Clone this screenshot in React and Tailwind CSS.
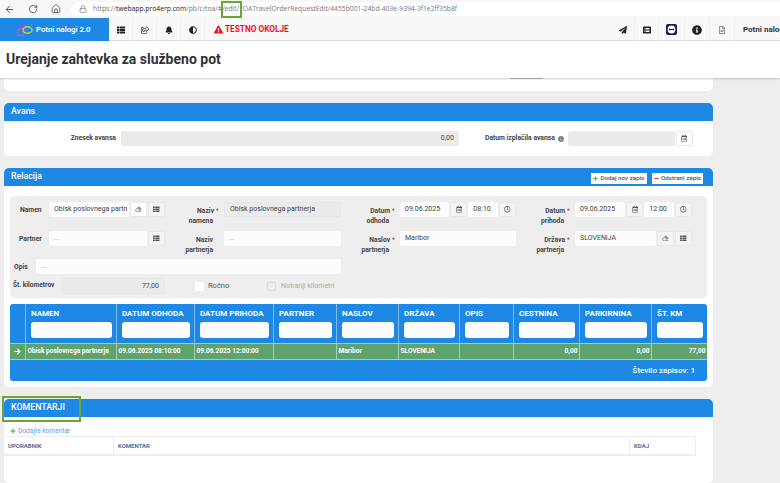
import React from 'react';
import { ArrowLeft, RotateCw, Home, Lock } from 'lucide-react';
import {
  FaThList, FaRegShareSquare, FaBell, FaAdjust, FaExclamationTriangle, FaPaperPlane, FaListAlt,
  FaInfoCircle, FaRegFileAlt, FaEraser, FaRegCalendarAlt, FaRegClock, FaPlus, FaMinus, FaArrowRight,
} from 'react-icons/fa';

const columns = [
  { key: 'namen', label: 'NAMEN', w: 'w-[91px]', value: 'Obisk poslovnega partnerja' },
  { key: 'odhod', label: 'DATUM ODHODA', w: 'w-[78px]', value: '09.06.2025 08:10:00' },
  { key: 'prihod', label: 'DATUM PRIHODA', w: 'w-[79px]', value: '09.06.2025 12:00:00' },
  { key: 'partner', label: 'PARTNER', w: 'w-[63px]', value: '' },
  { key: 'naslov', label: 'NASLOV', w: 'w-[62px]', value: 'Maribor' },
  { key: 'drzava', label: 'DRŽAVA', w: 'w-[61px]', value: 'SLOVENIJA' },
  { key: 'opis', label: 'OPIS', w: 'w-[54px]', value: '' },
  { key: 'cestnina', label: 'CESTNINA', w: 'w-[66px]', value: '0,00', right: true },
  { key: 'parkirnina', label: 'PARKIRNINA', w: 'w-[72px]', value: '0,00', right: true },
  { key: 'km', label: 'ŠT. KM', w: 'w-[55px]', value: '77,00', right: true },
];

function Logo() {
  return (
    <svg width="17" height="14" viewBox="0 0 17 14" fill="none" className="mr-[3px]">
      <ellipse cx="5" cy="9" rx="4" ry="3.4" stroke="#e8508f" strokeWidth="1.3" transform="rotate(-35 5 9)" />
      <ellipse cx="7" cy="4.5" rx="2.6" ry="3.4" stroke="#7b5cd6" strokeWidth="1.2" />
      <ellipse cx="11.5" cy="7" rx="4.6" ry="3.2" stroke="#c6d63a" strokeWidth="1.4" />
    </svg>
  );
}

function TeamIcon() {
  return (
    <svg width="11" height="11" viewBox="0 0 11 11">
      <rect width="11" height="11" rx="2" fill="#14146b" />
      <circle cx="5.5" cy="5.5" r="3.9" fill="#fff" />
      <path d="M2.4 5.5 4 4.3v.7h3v-.7l1.6 1.2L7 6.7V6H4v.7z" fill="#14146b" />
    </svg>
  );
}

function NavIcon({ children, className = '' }) {
  return (
    <div className={`flex h-full w-[24px] items-center justify-center border-r border-[#f0f0f0] text-[8px] text-[#222] ${className}`}>
      {children}
    </div>
  );
}

function Btn({ children, className = 'w-[17px]' }) {
  return (
    <div className={`flex h-[15px] shrink-0 items-center justify-center rounded-[2px] border border-[#e8e8e8] bg-[#f4f4f4] text-[6.5px] text-[#555] ${className}`}>
      {children}
    </div>
  );
}

function Input({ children, className = '', gray, right }) {
  return (
    <div className={`flex h-[15px] min-w-0 items-center overflow-hidden whitespace-nowrap rounded-[2px] px-[5px] text-[7px] text-[#444] ${gray ? 'bg-[#ebebeb]' : 'bg-[#fcfcfc]'} ${right ? 'justify-end' : ''} ${className}`}>
      {children}
    </div>
  );
}

function Label({ lines, star, w }) {
  return (
    <div className={`shrink-0 pr-[11px] pt-[4px] text-right text-[6.75px] font-bold leading-[10px] text-[#444] ${w}`}>
      {lines[0]}
      {star && <span className="ml-[2px] mr-[-6px] font-normal text-[#c0392b]">*</span>}
      {lines[1] && <div>{lines[1]}</div>}
    </div>
  );
}

function Card({ title, right, children, className = '' }) {
  return (
    <div className={`overflow-hidden rounded-[5px] bg-white ${className}`}>
      <div className="flex h-[18px] items-center justify-between bg-[#1e88e5] pl-[7px] pr-[10px] text-[8.8px] font-medium text-white">
        <span>{title}</span>
        {right}
      </div>
      {children}
    </div>
  );
}

function HeaderButton({ icon, label, w }) {
  return (
    <div className={`flex h-[11px] items-center justify-center gap-[2px] whitespace-nowrap bg-white text-[6.25px] text-[#555] ${w}`}>
      {icon}
      {label}
    </div>
  );
}

function RelacijaForm() {
  return (
    <div className="h-[102px] rounded-[5px] bg-[#eeeeee] pt-[6px]">
      <div className="flex h-[29px]">
        <div className="w-[39px] shrink-0 pl-[10px] pt-[3px] text-[6.75px] font-bold leading-[10px] text-[#444]">Namen</div>
        <div className="flex w-[116px] shrink-0 items-start gap-[1px]">
          <Input className="w-[80px]">Obisk poslovnega partn</Input>
          <Btn className="w-[17px] bg-white text-[#999]"><FaEraser /></Btn>
          <Btn><FaThList /></Btn>
        </div>
        <Label lines={['Naziv', 'namena']} star w="w-[59px]" />
        <Input gray className="w-[117px] border border-[#e6e6e6]">Obisk poslovnega partnerja</Input>
        <Label lines={['Datum', 'odhoda']} star w="w-[59px]" />
        <div className="flex w-[116px] shrink-0 items-start gap-[1px]">
          <Input className="w-[50px]">09.06.2025</Input>
          <Btn><FaRegCalendarAlt /></Btn>
          <Input className="w-[30px]">08:10</Input>
          <Btn><FaRegClock /></Btn>
        </div>
        <Label lines={['Datum', 'prihoda']} star w="w-[59px]" />
        <div className="flex w-[117px] shrink-0 items-start gap-[1px]">
          <Input className="w-[51px]">09.06.2025</Input>
          <Btn><FaRegCalendarAlt /></Btn>
          <Input className="w-[30px]">12:00</Input>
          <Btn><FaRegClock /></Btn>
        </div>
      </div>
      <div className="flex h-[28px]">
        <div className="w-[39px] shrink-0 pl-[9px] pt-[3px] text-[6.75px] font-bold leading-[10px] text-[#444]">Partner</div>
        <div className="flex w-[116px] shrink-0 items-start gap-[1px]">
          <Input className="w-[98px] text-[#aaa]">...</Input>
          <Btn><FaThList /></Btn>
        </div>
        <Label lines={['Naziv', 'partnerja']} w="w-[59px]" />
        <Input className="w-[117px] text-[#aaa]">...</Input>
        <Label lines={['Naslov', 'partnerja']} star w="w-[59px]" />
        <Input className="w-[116px]">Maribor</Input>
        <Label lines={['Država', 'partnerja']} star w="w-[59px]" />
        <div className="flex w-[117px] shrink-0 items-start gap-[1px]">
          <Input className="w-[81px]">SLOVENIJA</Input>
          <Btn className="w-[17px] text-[#999]"><FaEraser /></Btn>
          <Btn><FaThList /></Btn>
        </div>
      </div>
      <div className="flex h-[19px] items-start">
        <div className="w-[26px] shrink-0 pl-[4px] pt-[3px] text-[6.75px] font-bold leading-[10px] text-[#444]">Opis</div>
        <Input className="w-[305px] text-[#aaa]">...</Input>
      </div>
      <div className="flex h-[16px] items-center">
        <div className="w-[52px] shrink-0 whitespace-nowrap pl-[3px] text-[6.6px] font-bold text-[#444]">Št. kilometrov</div>
        <Input gray right className="h-[16px] w-[103px] border border-[#e6e6e6]">77,00</Input>
        <div className="ml-[30px] h-[9px] w-[9px] rounded-[1px] bg-white" />
        <span className="ml-[4px] w-[21px] text-[7.5px] text-[#555]">Ročno</span>
        <div className="ml-[38px] h-[9px] w-[9px] rounded-[1px] border border-[#dcdcdc]" />
        <span className="ml-[5px] whitespace-nowrap text-[7px] text-[#aaa]">Notranji kilometri</span>
      </div>
    </div>
  );
}

function TravelTable() {
  return (
    <div className="mt-[6px] h-[77px] overflow-hidden rounded-[3px] bg-[#1e88e5]">
      <div className="flex h-[39px]">
        <div className="w-[16px] border-r border-[#7fb8ec]" />
        {columns.map((c) => (
          <div key={c.key} className={`${c.w} border-r border-[#7fb8ec] pl-[5px] pr-[4px] pt-[5px] last:border-r-0`}>
            <div className="h-[13px] whitespace-nowrap text-[8px] font-bold leading-[10px] text-white">{c.label}</div>
            <div className="h-[16px] rounded-[3px] bg-[#fcfcfc]" />
          </div>
        ))}
      </div>
      <div className="flex h-[17px] border-y border-[#a9cdb0] bg-[#5fa36c] text-[6.6px] font-bold text-white">
        <div className="flex w-[16px] items-center justify-center border-r border-[#a9cdb0] text-[7px]"><FaArrowRight /></div>
        {columns.map((c) => (
          <div key={c.key} className={`${c.w} flex items-center overflow-hidden whitespace-nowrap border-r border-[#a9cdb0] px-[1.5px] last:border-r-0 ${c.right ? 'justify-end' : ''}`}>
            {c.value}
          </div>
        ))}
      </div>
      <div className="flex h-[21px] items-center justify-end pr-[12px] text-[8px] font-medium text-white">
        Število zapisov: 1
      </div>
    </div>
  );
}

export default function App() {
  return (
    <div className="relative h-[483px] w-[780px] overflow-hidden bg-[#eeeeee] font-['Roboto',sans-serif]">
      {/* browser bar */}
      <div className="flex h-[18px] items-center bg-[#f7f7f7] pl-[3px] text-[#555]">
        <ArrowLeft size={11} className="ml-[1px]" />
        <RotateCw size={10} className="ml-[13px]" />
        <Home size={10} className="ml-[13px]" />
        <div className="ml-[10px] flex h-[14px] flex-1 items-center rounded-l-full bg-white pl-[8px] font-['Open_Sans',sans-serif] text-[6.75px] text-[#777]">
          <Lock size={8} className="mr-[6px] shrink-0" />
          <span className="whitespace-nowrap">
            https://<span className="text-[#222]">twebapp.pro4erp.com</span>/pb/c/toa/#/edit/TOATravelOrderRequestEdit/4455b001-24bd-403e-9394-3f1e2ff35b8f
          </span>
        </div>
      </div>

      {/* app nav */}
      <div className="flex h-[23px] items-center bg-[#f8f8f8] shadow-[inset_0_-1px_0_#e0e0e0]">
        <div className="flex h-full w-[109px] items-center bg-[#1e88e5] pl-[16px] text-[7.75px] font-semibold text-white">
          <Logo />
          Potni nalogi 2.0
        </div>
        <NavIcon><FaThList /></NavIcon>
        <NavIcon><FaRegShareSquare /></NavIcon>
        <NavIcon><FaBell /></NavIcon>
        <NavIcon><FaAdjust /></NavIcon>
        <div className="ml-[9px] flex items-center gap-[2px] text-[8.25px] font-bold text-[#f40f1e]">
          <FaExclamationTriangle className="text-[9px]" />
          TESTNO OKOLJE
        </div>
        <div className="ml-auto flex h-full items-center">
          <NavIcon><FaPaperPlane /></NavIcon>
          <NavIcon><FaListAlt /></NavIcon>
          <NavIcon className="w-[26px]"><TeamIcon /></NavIcon>
          <NavIcon className="w-[25px] text-[10px] text-[#1e88e5]"><FaInfoCircle /></NavIcon>
          <NavIcon className="w-[25px] text-[#777]"><FaRegFileAlt /></NavIcon>
          <div className="w-[45px] whitespace-nowrap pl-[8px] text-[8px] font-bold text-[#333]">Potni nalog</div>
        </div>
      </div>

      {/* page title */}
      <div className="relative z-10 flex h-[37px] items-center bg-white pl-[6px] text-[14px] font-bold text-[#333] shadow-[0_1px_2px_rgba(0,0,0,0.2)]">
        Urejanje zahtevka za službeno pot
      </div>

      <div className="w-[709px] pl-[4px] box-content">
        <div className="h-[13px] rounded-b-[5px] bg-white pl-[506px]">
          <div className="h-px w-[33px] bg-[#bbbbbb]" />
        </div>

        <Card title="Avans" className="mt-[12px] h-[53px]">
          <div className="flex items-center pt-[10px]">
            <div className="w-[112px] shrink-0 text-right text-[6.75px] font-bold text-[#444]">Znesek avansa</div>
            <Input gray right className="ml-[5px] w-[338px] shrink-0">0,00</Input>
            <div className="ml-[26px] flex w-[83px] shrink-0 items-center gap-[3px] whitespace-nowrap text-[6.75px] font-bold text-[#444]">
              Datum izplačila avansa
              <FaInfoCircle className="shrink-0 text-[6px] text-[#777]" />
            </div>
            <div className="flex items-center gap-[1px]">
              <Input gray className="w-[107px]" />
              <Btn className="w-[17px] bg-white"><FaRegCalendarAlt /></Btn>
            </div>
          </div>
        </Card>

        <Card
          title="Relacija"
          className="mt-[12px] h-[219px]"
          right={
            <div className="mt-[3px] flex gap-[5px]">
              <HeaderButton w="w-[56px]" icon={<FaPlus className="text-[5px] text-[#4caf50]" />} label="Dodaj nov zapis" />
              <HeaderButton w="w-[51px]" icon={<FaMinus className="text-[5px] text-[#e53935]" />} label="Odstrani zapis" />
            </div>
          }
        >
          <div className="px-[6px] pt-[10px]">
            <RelacijaForm />
            <TravelTable />
          </div>
        </Card>

        <Card title="KOMENTARJI" className="mt-[12px] h-[84px]">
          <div className="flex h-[19px] items-start pl-[6px] pt-[10px] text-[6.6px] leading-[8px] text-[#5a9fe0]">
            <FaPlus className="mr-[2px] mt-[1px] text-[6px] text-[#4caf50]" />
            Dodajte komentar
          </div>
          <div className="flex h-[20px] w-[692px] border-y border-b-2 border-[#eeeeee] text-[6px] font-bold text-[#4f6f9f]">
            <div className="flex w-[110px] items-center border-r border-[#eeeeee] pl-[4px]">UPORABNIK</div>
            <div className="flex w-[516px] items-center border-r border-[#eeeeee] pl-[4px]">KOMENTAR</div>
            <div className="flex flex-1 items-center border-r border-[#eeeeee] pl-[4px]">KDAJ</div>
          </div>
        </Card>
      </div>

      {/* annotation boxes from the screenshot */}
      <div className="absolute left-[221px] top-[1px] z-20 h-[17px] w-[21px] border-2 border-[#6aa632]" />
      <div className="absolute left-[2px] top-[396px] z-20 h-[26px] w-[79px] border-2 border-[#6aa632]" />
    </div>
  );
}
